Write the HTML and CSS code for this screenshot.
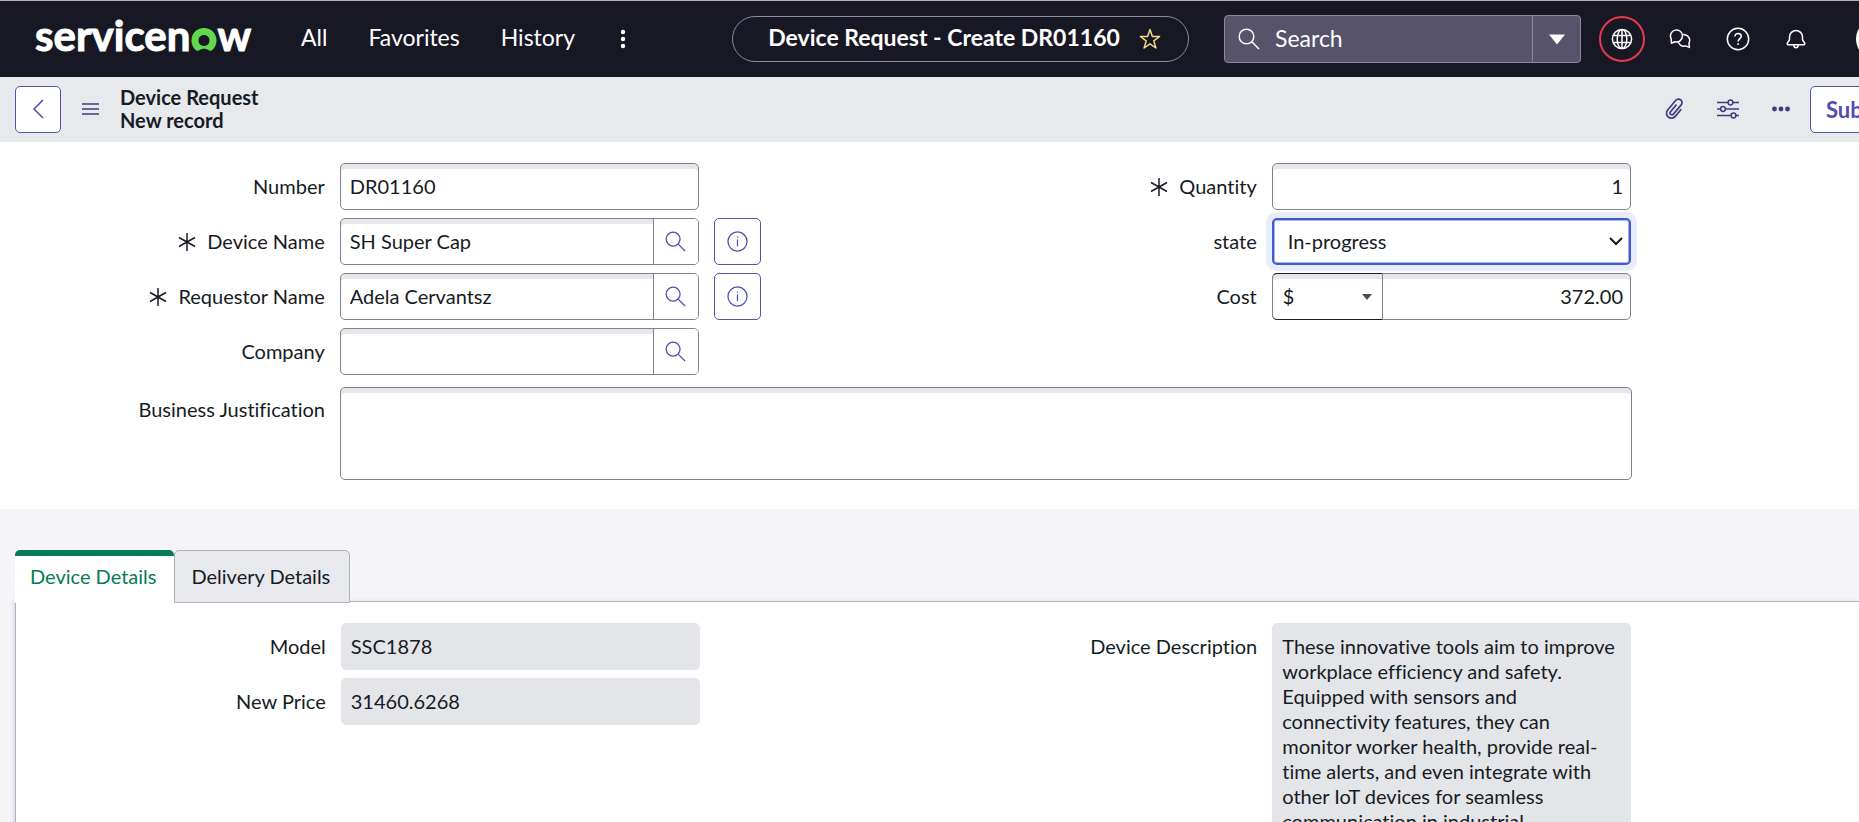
FILE: index.html
```html
<!DOCTYPE html>
<html lang="en">
<head>
<meta charset="utf-8">
<meta name="viewport" content="width=device-width, initial-scale=1">
<title>Device Request - Create DR01160</title>
<link rel="stylesheet" href="styles.css">
</head>
<body>
<svg class="sprite" aria-hidden="true">
  <symbol id="i-search" viewBox="0 0 22 22"><circle cx="8.5" cy="8.5" r="7.3"/><path d="M13.8 13.8 21 21"/></symbol>
  <symbol id="i-info" viewBox="0 0 22 22"><circle cx="11" cy="11" r="10"/><path d="M11 9v7M11 5.8v1.4"/></symbol>
  <symbol id="i-star6" viewBox="0 0 18 18"><path d="M9 0v18M1 4.5l16 9M17 4.5l-16 9"/></symbol>
</svg>

<header class="topbar">
  <a class="logo" href="#" aria-label="servicenow"><span>servicen</span><svg class="logo-o" viewBox="1 1.5 22 20.2" aria-hidden="true"><path d="M12 1.500C5.800 1.500 1 6.300 1 12.400c0 3.500 1.500 6.500 3.900 8.600.8.700 2 .8 2.900.1 2.500-1.800 5.900-1.800 8.400 0 .9.700 2.100.600 2.900-.1 2.400-2.100 3.900-5.100 3.900-8.600 0-6.100-4.800-10.900-11-10.900zm0 15.700c-2.800 0-4.800-2-4.800-4.800S9.200 7.600 12 7.600s4.800 2 4.800 4.800-2 4.800-4.800 4.800z"/></svg><span>w</span></a>
  <nav class="menu">
    <a href="#">All</a>
    <a href="#">Favorites</a>
    <a href="#">History</a>
    <button class="more" type="button" aria-label="More menus"><svg viewBox="0 0 6 20"><circle cx="3" cy="3" r="2.2"/><circle cx="3" cy="10" r="2.2"/><circle cx="3" cy="17" r="2.2"/></svg></button>
  </nav>
  <div class="pill">
    <strong>Device Request - Create DR01160</strong>
    <button type="button" aria-label="Add to favorites"><svg viewBox="0 0 22 22"><path d="M11 1.5l2.400 6.900 7.200.1-5.800 4.400 2.100 7.100L11 15.900 5.100 20l2.100-7.100L1.400 8.500l7.200-.1z"/></svg></button>
  </div>
  <form class="search">
    <label for="q"><svg aria-hidden="true"><use href="#i-search"/></svg></label>
    <input id="q" type="text" placeholder="Search" aria-label="Search">
    <button type="button" aria-label="Search options"><svg viewBox="0 0 16 10"><path d="M0 0h16L8 10z"/></svg></button>
  </form>
  <div class="tools">
    <button class="globe" type="button" aria-label="Scope"><svg viewBox="0 0 22 22"><circle cx="11" cy="11" r="9.6"/><ellipse cx="11" cy="11" rx="4.8" ry="9.6"/><path d="M2.500 7.500h17M2.500 14.500h17M11 1.400v19.200"/></svg></button>
    <button type="button" aria-label="Conversations"><svg viewBox="0 0 22 22"><path d="M20 15A5.800 5.800 0 1 0 16.500 17.900l3.900 1.500z"/><path class="front" d="M2.200 10.800A6 6 0 1 1 5.800 13.700L2.400 15.200z"/></svg></button>
    <button type="button" aria-label="Help"><svg class="help" viewBox="0 0 24 24"><circle cx="12" cy="12" r="10.7"/><path d="M8.900 9.500c0-1.900 1.300-3.100 3.200-3.100s3.200 1.200 3.200 2.900c0 2.400-3.200 2.400-3.200 5.200M12.100 16.300v1.800"/></svg></button>
    <button type="button" aria-label="Notifications"><svg viewBox="0 0 22 22"><path d="M4.500 11.500V9a6.500 6.500 0 0 1 13 0v2.500c0 1.400 2.300 2.600 2.300 4.200 0 .7-.4 1.100-1.100 1.100H3.300c-.7 0-1.100-.4-1.100-1.100 0-1.600 2.300-2.800 2.300-4.200zM8.800 17c0 3.600 4.400 3.600 4.400 0"/></svg></button>
    <button class="avatar" type="button" aria-label="Profile"></button>
  </div>
</header>

<div class="recordbar">
  <button class="back" type="button" aria-label="Back"><svg viewBox="0 0 12 20"><path d="M11 1 2 10l9 9"/></svg></button>
  <button class="icon burger" type="button" aria-label="Form menu"><svg viewBox="0 0 17 12"><path d="M0 1h17M0 6h17M0 11h17"/></svg></button>
  <h1>Device Request<br>New record</h1>
  <div class="actions">
    <button class="icon" type="button" aria-label="Attachments"><svg viewBox="1 1 20 20"><path transform="rotate(40 11 11)" d="M15.500 7.500V16a4.500 4.500 0 0 1-9 0V4.500a3.200 3.200 0 0 1 6.400 0V15.500a1.700 1.700 0 0 1-3.400 0V7"/></svg></button>
    <button class="icon" type="button" aria-label="Personalize form"><svg viewBox="0 0 22 20"><path d="M0 3.500h11M16 3.500h6M0 10h3.500M8.500 10H22M0 16.500h14M19 16.500h3"/><circle cx="13.500" cy="3.500" r="2.400"/><circle cx="6" cy="10" r="2.400"/><circle cx="16.500" cy="16.500" r="2.400"/></svg></button>
    <button class="icon dots" type="button" aria-label="More options"><svg viewBox="0 0 18 6"><circle cx="2.500" cy="3" r="2.400"/><circle cx="9" cy="3" r="2.400"/><circle cx="15.500" cy="3" r="2.400"/></svg></button>
    <button class="submit" type="button">Submit</button>
  </div>
</div>

<main>
  <form class="fields">
    <div class="col">
      <div class="row"><label for="number">Number</label><input class="box" id="number" type="text" value="DR01160"></div>
      <div class="row"><label for="device"><svg class="req" aria-hidden="true"><use href="#i-star6"/></svg>Device Name</label>
        <div class="box group"><input id="device" type="text" value="SH Super Cap"><button type="button" aria-label="Look up device"><svg><use href="#i-search"/></svg></button></div>
        <button class="info" type="button" aria-label="Preview device"><svg><use href="#i-info"/></svg></button></div>
      <div class="row"><label for="requestor"><svg class="req" aria-hidden="true"><use href="#i-star6"/></svg>Requestor Name</label>
        <div class="box group"><input id="requestor" type="text" value="Adela Cervantsz"><button type="button" aria-label="Look up requestor"><svg><use href="#i-search"/></svg></button></div>
        <button class="info" type="button" aria-label="Preview requestor"><svg><use href="#i-info"/></svg></button></div>
      <div class="row"><label for="company">Company</label>
        <div class="box group"><input id="company" type="text"><button type="button" aria-label="Look up company"><svg><use href="#i-search"/></svg></button></div></div>
    </div>
    <div class="col right">
      <div class="row"><label for="quantity"><svg class="req" aria-hidden="true"><use href="#i-star6"/></svg>Quantity</label><input class="box num" id="quantity" type="text" value="1"></div>
      <div class="row"><label for="state">state</label>
        <div class="select-wrap"><select class="box state" id="state"><option>In-progress</option></select><svg class="chev" viewBox="0 0 14 10" aria-hidden="true"><path d="M1 2l6 6 6-6"/></svg></div></div>
      <div class="row"><label for="cost">Cost</label>
        <div class="cost"><div class="currency"><select aria-label="Currency"><option>$</option></select><svg class="tri" viewBox="0 0 10 6" aria-hidden="true"><path d="M0 0h10L5 6z"/></svg></div><input id="cost" class="num" type="text" value="372.00"></div></div>
    </div>
    <div class="row wide"><label for="just">Business Justification</label><textarea class="box" id="just"></textarea></div>
  </form>

  <section class="details">
    <div class="tabs" role="tablist">
      <button class="tab active" type="button" role="tab" aria-selected="true">Device Details</button>
      <button class="tab" type="button" role="tab" aria-selected="false">Delivery Details</button>
    </div>
    <div class="panel">
      <div class="col">
        <div class="row"><label for="model">Model</label><input class="box ro" id="model" type="text" value="SSC1878" readonly></div>
        <div class="row"><label for="price">New Price</label><input class="box ro" id="price" type="text" value="31460.6268" readonly></div>
      </div>
      <div class="col right">
        <div class="row"><label for="desc">Device Description</label><textarea class="box ro" id="desc" readonly>These innovative tools aim to improve workplace efficiency and safety. Equipped with sensors and connectivity features, they can monitor worker health, provide real-time alerts, and even integrate with other IoT devices for seamless communication in industrial environments.</textarea></div>
      </div>
    </div>
  </section>
</main>
</body>
</html>
```
FILE: styles.css
```css
* { box-sizing: border-box; }
html { height: 100%; }
body {
  margin: 0;
  min-height: 100%;
  font: 20px/25px Lato, "Liberation Sans", sans-serif;
  font-variant-ligatures: none;
  color: #161b24;
  background: #fff;
  overflow: hidden;
}
button, input, select, textarea { font: inherit; font-variant-ligatures: inherit; color: inherit; margin: 0; }
button { padding: 0; border: 0; background: none; cursor: pointer; }
svg { display: block; flex: none; fill: none; stroke: currentColor; }
.sprite { position: absolute; width: 0; height: 0; }

/* Top navigation */
.topbar {
  display: flex;
  align-items: center;
  height: 77px;
  border-top: 1px solid #b3adb5;
  padding-left: 35px;
  background: #181825;
  color: #fff;
  overflow: hidden;
}
.logo {
  display: flex;
  width: 216px;
  flex: none;
  align-items: baseline;
  padding-bottom: 9px;
  font-size: 42px;
  line-height: 50px;
  font-weight: 700;
  color: #fff;
  -webkit-text-stroke: 1px #fff;
  text-decoration: none;
}
.logo-o { width: 26px; height: 23px; margin-left: 1px; fill: #62d84e; stroke: none; }
.menu { display: flex; align-items: center; gap: 41px; margin-left: 50px; font-size: 23px; line-height: 30px; }
.menu a { color: inherit; padding-bottom: 5px; text-decoration: none; }
.more { margin-left: 4px; }
.more svg { width: 6px; height: 20px; fill: #fff; stroke: none; }
.pill {
  display: flex;
  align-items: center;
  justify-content: center;
  gap: 19px;
  width: 457px;
  height: 46px;
  margin-left: auto;
  padding-left: 8px;
  flex: none;
  border: 1px solid #8d8c9b;
  border-radius: 23px;
  font-size: 23px;
  white-space: nowrap;
}
.pill strong { padding-bottom: 3px; }
.pill svg { width: 22px; height: 22px; stroke: #f5d98b; stroke-width: 1.5; stroke-linejoin: round; }
.search {
  display: flex;
  width: 357px;
  height: 48px;
  flex: none;
  margin-left: 35px;
  border: 1px solid #8a889c;
  border-radius: 4px;
  background: #56536b;
}
.search label { display: flex; align-items: center; padding-left: 13px; }
.search label svg { width: 22px; height: 22px; stroke-width: 1.5; }
.search input { flex: 1; min-width: 0; border: 0; padding: 0 0 1px 15px; background: none; font-size: 23px; outline: 0; }
.search input::placeholder { color: #fff; opacity: 1; }
.search button { width: 48px; border-left: 1px solid #8a889c; display: grid; place-items: center; }
.search button svg { width: 16px; height: 11px; fill: #fff; stroke: none; }
.tools { display: flex; align-items: center; gap: 12px; margin-left: 18px; margin-right: -37px; flex: none; }
.tools button { width: 46px; height: 46px; display: grid; place-items: center; border-radius: 50%; }
.tools svg { width: 22px; height: 22px; stroke-width: 1.5; stroke-linejoin: round; }
.tools .front { fill: #181825; }
.tools .help { width: 24px; height: 24px; }
.tools .globe { border: 2px solid #e5394f; }
.tools .avatar { background: #fff; width: 40px; height: 40px; margin-left: 25px; }

/* Record header */
.recordbar {
  display: flex;
  align-items: center;
  height: 65px;
  padding-left: 15px;
  background: #e8e9ed;
  overflow: hidden;
}
.back, .submit { height: 47px; border: 1px solid #5453b0; border-radius: 5px; background: #fff; color: #4f4dae; flex: none; }
.back { width: 46px; padding-bottom: 2px; display: grid; place-items: center; }
.back svg { width: 12px; height: 20px; stroke-width: 1.5; }
.icon { color: #3d3c80; padding-bottom: 2px; }
.icon svg { width: 22px; height: 22px; stroke-width: 1.5; }
.burger { margin: 0 21px; }
.icon.burger svg { width: 17px; height: 14px; }
.recordbar h1 { margin: 0; padding-bottom: 2px; font-size: 20px; line-height: 23px; font-weight: 700; }
.actions { display: flex; align-items: center; gap: 31px; margin-left: auto; margin-right: -49px; flex: none; }
.dots { margin-left: 2px; }
.icon.dots svg { width: 18px; height: 6px; fill: currentColor; stroke: none; }
.submit { width: 98px; margin-left: -11px; padding-left: 15px; text-align: left; font-size: 22px; font-weight: 700; }

/* Form grid */
.fields, .panel {
  display: grid;
  grid-template-columns: 1fr 1fr;
}
.fields { padding: 21px 0 29px; }
.col { display: flex; flex-direction: column; gap: 8px; padding-right: 169px; }
.right { padding-right: 166px; }
.row {
  display: grid;
  grid-template-columns: minmax(0, 325fr) minmax(0, 359fr) 47px;
  column-gap: 15px;
  align-items: start;
}
.right .row { grid-template-columns: minmax(0, 327fr) minmax(0, 359fr) 47px; }
.row label { display: flex; align-items: center; justify-content: flex-end; gap: 11px; padding-top: 11px; white-space: nowrap; }
.req { width: 18px; height: 18px; stroke-width: 1.5; }
.box, .cost {
  width: 100%;
  height: 47px;
  border: 1px solid #80838c;
  border-radius: 5px;
  padding: 0 9px 2px;
  background: #fff;
  box-shadow: inset 0 5px 1px #e6e7ea;
  outline: 0;
}
.box.group { display: flex; padding: 0; }
.group input { flex: 1; min-width: 0; border: 0; padding: 0 9px; background: none; outline: 0; }
.group button { width: 45px; border-left: 1px solid #80838c; border-radius: 0 4px 4px 0; background: #fff; color: #4f4dae; display: grid; place-items: center; }
.group svg, .info svg { width: 21px; height: 21px; stroke-width: 1.3; }
.info { height: 47px; border: 1px solid #5453b0; border-radius: 5px; color: #4f4dae; display: grid; place-items: center; }
.num { text-align: right; }
.box.num { padding-right: 7px; }
.select-wrap, .currency { position: relative; }
select { appearance: none; outline: 0; }
.box.state { display: block; border: 2px solid #415ad0; padding: 0 14px; box-shadow: 0 0 0 6px #e9edfb, inset 0 0 0 1px #a9b6ee; }
.chev { position: absolute; right: 8px; top: 18px; width: 14px; height: 10px; stroke-width: 2; pointer-events: none; }
.cost { display: flex; padding: 0; }
.currency { width: 111px; margin: -1px 0 -1px -1px; flex: none; }
.currency select { width: 100%; height: 47px; border: 1px solid #1c1e26; border-left-color: #80838c; border-right-color: #80838c; border-radius: 5px 0 0 5px; padding: 0 10px; background: none; }
.tri { position: absolute; right: 11px; top: 21px; width: 10px; height: 6px; fill: #4a4c57; stroke: none; pointer-events: none; }
.cost input { flex: 1; min-width: 0; border: 0; padding: 0 7px 0 0; background: none; outline: 0; }
.wide { grid-column: 1 / -1; grid-template-columns: 325fr 1292fr; margin-top: 12px; padding-right: 227px; }
.wide label { padding-top: 10px; }
textarea { display: block; resize: none; }
.wide textarea { height: 93px; }

/* Related tabs */
.details { background: #f5f5f8; padding: 41px 0 0 15px; }
.tabs { display: flex; position: relative; margin-bottom: -2px; }
.tab { height: 53px; padding: 0 19px 0 16px; border: 1px solid #aeb1bb; border-radius: 5px 5px 0 0; background: #e8e9ed; white-space: nowrap; }
.tab.active { border: 0; border-top: 6px solid #077a57; padding: 0 18px 6px 15px; background: #fff; color: #077a57; }
.panel { border-top: 1px solid #aeb1bb; border-left: 1px solid #aeb1bb; box-shadow: -2px 0 4px #dcdce6; background: #fff; padding-top: 21px; min-height: 230px; }
.panel .col { padding-right: 176px; }
.panel .row { grid-template-columns: minmax(0, 310fr) minmax(0, 359fr) 47px; }
.panel .right { padding-right: 166px; }
.panel .right .row { grid-template-columns: minmax(0, 320fr) minmax(0, 359fr) 47px; }
.box.ro { border-color: #e4e5e9; background: #e4e5e9; box-shadow: none; }
#desc { height: 230px; padding: 10px 9px; overflow: hidden; }
```
